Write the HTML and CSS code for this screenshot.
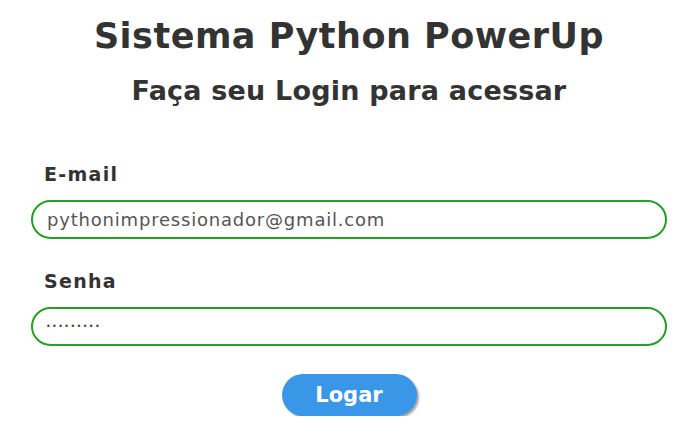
FILE: index.html
```html
<!DOCTYPE html>
<html lang="pt-BR">
<head>
<meta charset="utf-8">
<title>Login</title>
<link rel="stylesheet" href="styles.css">
</head>
<body>
<main class="page">
  <h1 class="title">Sistema Python PowerUp</h1>
  <h2 class="subtitle">Faça seu Login para acessar</h2>
  <form class="form">
    <label class="label" for="email">E-mail</label>
    <input class="field" id="email" type="text" value="pythonimpressionador@gmail.com">
    <label class="label" for="senha">Senha</label>
    <input class="field pass" id="senha" type="password" value="123456789">
    <div class="actions"><button class="btn" type="button">Logar</button></div>
  </form>
</main>
</body>
</html>
```

FILE: styles.css
```css
* { box-sizing: border-box; }
html, body { margin: 0; background: #fff; }
body { font-family: "DejaVu Sans", sans-serif; color: #333; }
.page { padding: 12px 21px 0 31px; display: flex; flex-direction: column; }
.title { margin: 0; text-align: center; font-size: 35px; font-weight: 700; line-height: 48px; letter-spacing: 0.5px; }
.subtitle { margin: 14px 0 0; text-align: center; font-size: 27px; font-weight: 700; line-height: 34px; letter-spacing: 0.2px; }
.form { display: flex; flex-direction: column; margin-top: 54px; }
.label { margin-left: 13px; font-size: 19px; font-weight: 700; line-height: 24px; letter-spacing: 1.3px; }
.field { margin-top: 14px; height: 39px; border: 2px solid #24a024; border-radius: 20px; padding: 0 14px; font-family: inherit; font-size: 18px; letter-spacing: 0.8px; color: #555; outline: none; }
.field + .label { margin-top: 30px; }
.pass { font-size: 8px; letter-spacing: 1.4px; padding-left: 13px; color: #444; }
.actions { display: flex; justify-content: center; margin-top: 28px; }
.btn { width: 135px; height: 42px; border: none; border-radius: 21px; background: #3a97e8; color: #fff; font-family: inherit; font-size: 21px; font-weight: 700; box-shadow: 2px 2px 2px rgba(0,0,0,0.35); }
```
